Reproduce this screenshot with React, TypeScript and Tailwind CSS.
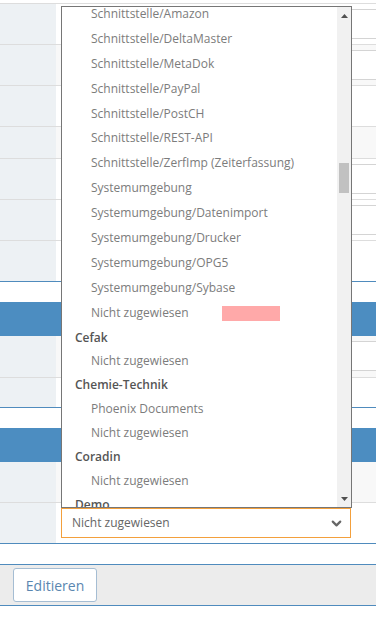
import { ChevronDown } from 'lucide-react'

const topOptions = [
  'Schnittstelle/Amazon',
  'Schnittstelle/DeltaMaster',
  'Schnittstelle/MetaDok',
  'Schnittstelle/PayPal',
  'Schnittstelle/PostCH',
  'Schnittstelle/REST-API',
  'Schnittstelle/ZerfImp (Zeiterfassung)',
  'Systemumgebung',
  'Systemumgebung/Datenimport',
  'Systemumgebung/Drucker',
  'Systemumgebung/OPG5',
  'Systemumgebung/Sybase',
]

const groupRows: { label: string; group?: boolean }[] = [
  { label: 'Cefak', group: true },
  { label: 'Nicht zugewiesen' },
  { label: 'Chemie-Technik', group: true },
  { label: 'Phoenix Documents' },
  { label: 'Nicht zugewiesen' },
  { label: 'Coradin', group: true },
  { label: 'Nicht zugewiesen' },
  { label: 'Demo', group: true },
]

type RowProps = {
  height: string
  alt?: boolean
  input?: boolean
  blue?: boolean
  children?: React.ReactNode
}

function Row({ height, alt, input, blue, children }: RowProps) {
  return (
    <div className={`flex border-b ${blue ? 'border-[#4f8bbd]' : 'border-[#dddddd]'} ${height}`}>
      <div className="w-[56px] shrink-0 bg-[#edf1f4]" />
      <div className={`min-w-0 flex-1 pl-[5px] pt-[5px] ${alt ? 'bg-[#f8f8f8]' : 'bg-white'}`}>
        {input && <div className="h-[30px] w-[340px] border border-[#d4d4d4] bg-white" />}
        {children}
      </div>
    </div>
  )
}

function Dropdown() {
  return (
    <div className="absolute left-[61px] top-[6px] flex h-[502px] w-[291px] border border-[#767676] bg-white">
      <div className="min-w-0 flex-1 overflow-hidden text-[12px]">
        <div className="-mt-[5px]">
          {topOptions.map((o) => (
            <div key={o} className="h-[24.9px] whitespace-nowrap pl-[29px] leading-[24.9px] text-[#7c7c7c]">
              {o}
            </div>
          ))}
          <div className="flex h-[24.9px] items-center pl-[29px] text-[#7c7c7c]">
            <span className="w-[131px] whitespace-nowrap">Nicht zugewiesen</span>
            <span className="h-[15px] w-[58px] bg-[#ffa9a9]" />
          </div>
          {groupRows.map((r, i) => (
            <div
              key={i}
              className={`h-[23.9px] whitespace-nowrap leading-[23.9px] ${
                r.group ? 'pl-[13px] font-semibold text-[#555555]' : 'pl-[29px] text-[#7c7c7c]'
              }`}
            >
              {r.label}
            </div>
          ))}
        </div>
      </div>
      <div className="flex w-[14px] shrink-0 flex-col bg-[#f1f1f1]">
        <div className="flex h-[17px] items-center justify-center">
          <svg width="7" height="4" viewBox="0 0 7 4">
            <path d="M0 4 L3.5 0 L7 4 Z" fill="#505050" />
          </svg>
        </div>
        <div className="flex-1 px-[2px] pt-[139px]">
          <div className="h-[30px] bg-[#c1c1c1]" />
        </div>
        <div className="flex h-[17px] items-center justify-center">
          <svg width="7" height="4" viewBox="0 0 7 4">
            <path d="M0 0 L3.5 4 L7 0 Z" fill="#505050" />
          </svg>
        </div>
      </div>
    </div>
  )
}

export default function App() {
  return (
    <div className="relative h-[618px] w-[376px] overflow-hidden bg-white font-['Open_Sans',sans-serif]">
      <div className="mt-[3px] border-t border-[#dddddd]">
        <Row height="h-[41px]" input />
        <Row height="h-[41px]" alt input />
        <Row height="h-[41px]" />
        <Row height="h-[32px]" alt />
        <Row height="h-[41px]" input />
        <Row height="h-[41px]" input />
        <Row height="h-[41px]" blue />
      </div>

      <div className="mt-[20px]">
        <div className="h-[34px] bg-[#4c8dc1]" />
        <Row height="h-[42px]" alt input />
        <Row height="h-[30px]" blue />
      </div>

      <div className="mt-[20px]">
        <div className="h-[34px] bg-[#4c8dc1]" />
        <Row height="h-[41px]" alt />
        <Row height="h-[41px]" blue>
          <div className="flex h-[30px] w-[290px] items-center justify-between border border-[#f3a03d] bg-white pl-[10px] pr-[6px] text-[12px] text-[#666666]">
            <span>Nicht zugewiesen</span>
            <ChevronDown className="h-[15px] w-[15px] text-[#666666]" strokeWidth={3.5} />
          </div>
        </Row>
      </div>

      <div className="mt-[20px] h-[42px] border-y border-[#4f8bbd] bg-[#ececec] pl-[13px] pt-[3px]">
        <button
          type="button"
          className="h-[34px] w-[84px] rounded-[3px] border border-[#a5bdd3] bg-white text-[14px] text-[#5a86b0]"
        >
          Editieren
        </button>
      </div>

      <Dropdown />
    </div>
  )
}
